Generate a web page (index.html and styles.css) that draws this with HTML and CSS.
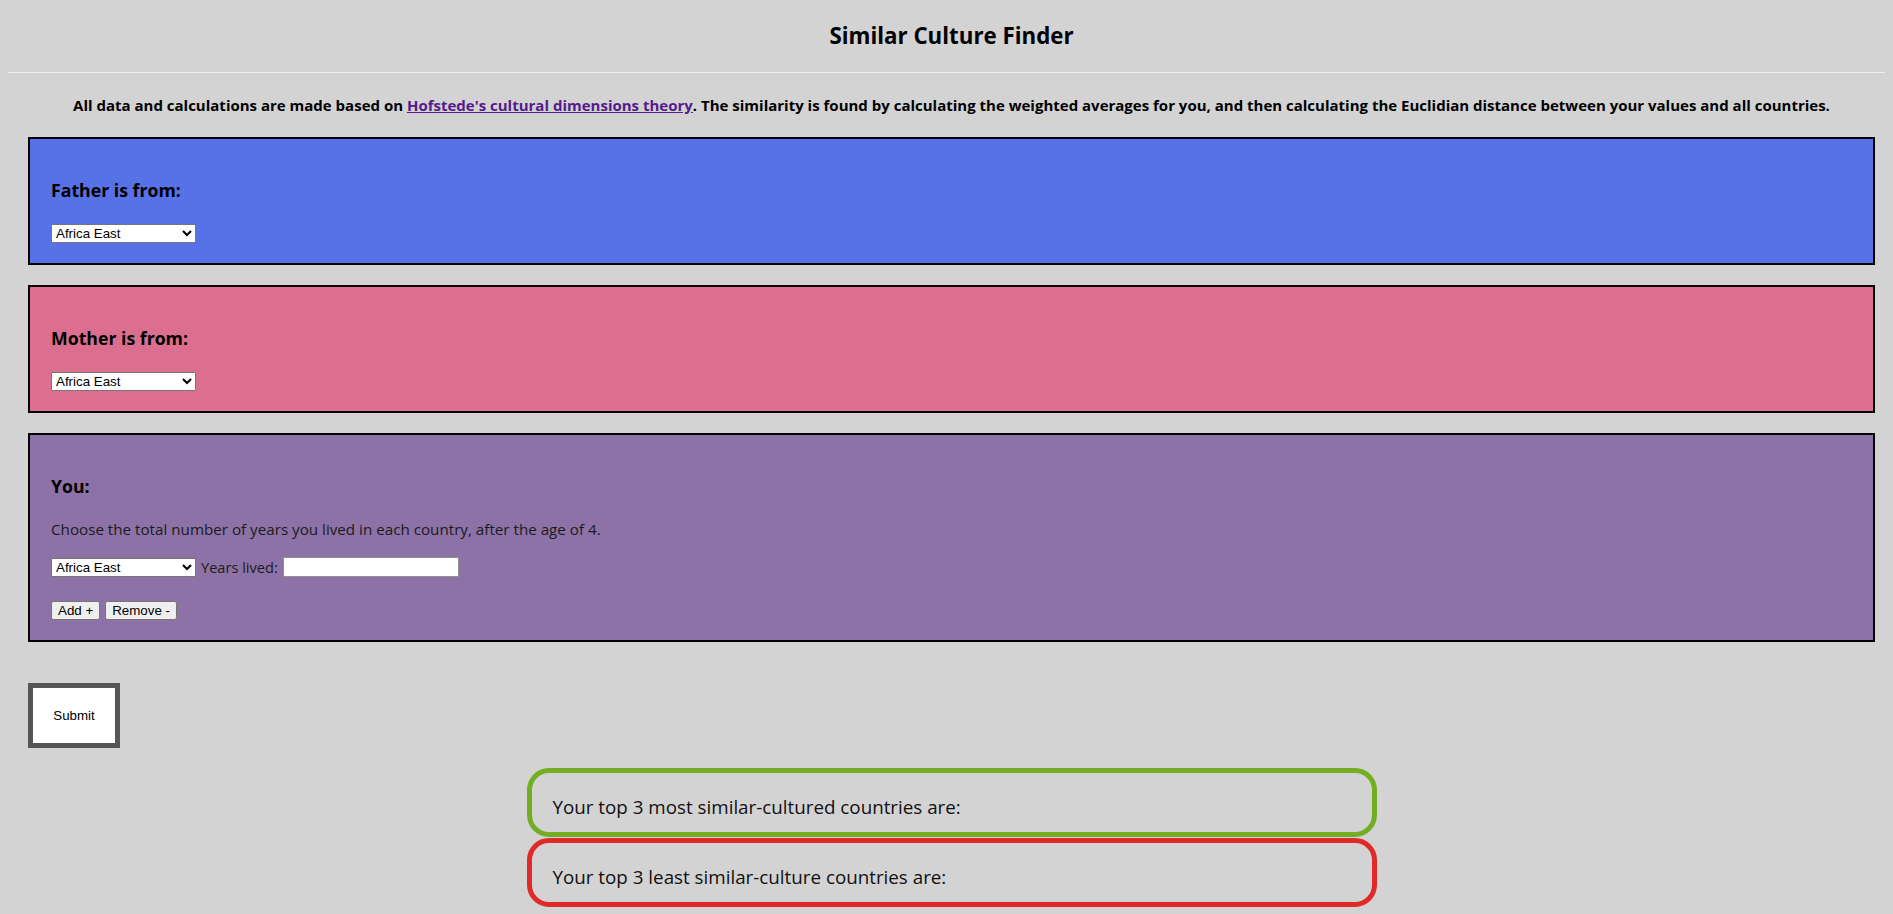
FILE: index.html
```html
<!DOCTYPE html>
<html lang="en">
<head>
<meta charset="utf-8">
<title>Similar Culture Finder</title>
<link rel="stylesheet" href="styles.css">
</head>
<body>
<header class="top">
  <h1 class="title">Similar Culture Finder</h1>
</header>
<hr class="rule">
<main class="main">
  <p class="intro">All data and calculations are made based on <a class="link" href="#">Hofstede's cultural dimensions theory</a>. The similarity is found by calculating the weighted averages for you, and then calculating the Euclidian distance between your values and all countries.</p>

  <section class="card card-father">
    <h3 class="card-title">Father is from:</h3>
    <select class="country"><option>Africa East</option><option>Africa West</option><option>Albania</option><option>Arab countries</option></select>
  </section>

  <section class="card card-mother">
    <h3 class="card-title">Mother is from:</h3>
    <select class="country"><option>Africa East</option><option>Africa West</option><option>Albania</option><option>Arab countries</option></select>
  </section>

  <section class="card card-you">
    <h3 class="card-title">You:</h3>
    <p class="hint">Choose the total number of years you lived in each country, after the age of 4.</p>
    <div class="row">
      <select class="country"><option>Africa East</option><option>Africa West</option><option>Albania</option><option>Arab countries</option></select>
      <label class="years-label">Years lived:</label>
      <input class="years" type="text">
    </div>
    <div class="actions">
      <button class="btn" type="button">Add +</button>
      <button class="btn" type="button">Remove -</button>
    </div>
  </section>

  <button class="submit" type="button">Submit</button>

  <div class="result result-most"><p class="result-text">Your top 3 most similar-cultured countries are:</p></div>
  <div class="result result-least"><p class="result-text">Your top 3 least similar-culture countries are:</p></div>
</main>
</body>
</html>
```
FILE: styles.css
```css
html, body { background: #d3d3d3; }
body { margin: 8px; font-family: "Open Sans", "Noto Sans", sans-serif; color: #000; }

.top { margin: 0 10px 0 20px; padding-top: 12px; }
.title { margin: 0; font-size: 22.3px; line-height: 32px; font-weight: 700; text-align: center; }
.rule { margin: 20px 0 0; border: 0; border-top: 1px solid #efefef; height: 0; }

.main { margin: 0 10px 0 20px; }
.intro { margin: 22px 0 0; font-size: 15px; line-height: 20px; font-weight: 700; text-align: center; }
.link { color: #551a8b; text-decoration: underline; }

.card { border: 2px solid #000; padding: 39px 21px 20px; margin-top: 22px; }
.card + .card { margin-top: 20px; }
.card-father { background: #5771e6; }
.card-mother { background: #dc6f8f; }
.card-you { background: #8d72a7; }
.card-title { margin: 0; font-size: 17.7px; line-height: 24px; font-weight: 700; }
.country { display: block; width: 145px; height: 19px; margin-top: 22px; font-family: "Liberation Sans", Arial, sans-serif; font-size: 13.33px; }
.hint { margin: 20px 0 0; font-size: 15.2px; line-height: 22px; color: #1b1b1b; }
.row { display: flex; align-items: center; gap: 5px; margin-top: 17px; height: 20px; }
.row .country { margin-top: 0; }
.years-label { font-size: 14.6px; color: #1b1b1b; }
.years { width: 176px; height: 20px; box-sizing: border-box; border: 1px solid #8f8f8f; background: #fff; margin: 0; }
.actions { display: flex; gap: 5px; margin-top: 24px; }
.btn { height: 19px; padding: 0 5px; font-family: "Liberation Sans", Arial, sans-serif; font-size: 13.33px; margin: 0; }

.submit { display: block; margin-top: 41px; width: 92px; height: 65px; border: 5px solid #555; background: #fff; font-family: "Liberation Sans", Arial, sans-serif; font-size: 13.33px; color: #000; }

.result { width: 850px; height: 69px; box-sizing: border-box; margin: 20px auto 0; border: 5px solid #73ad21; border-radius: 22px; padding: 21px 0 0 21px; }
.result-least { border-color: #e02a2a; margin-top: 1px; }
.result-text { margin: 0; font-size: 18.8px; line-height: 27px; color: #111; }
```
